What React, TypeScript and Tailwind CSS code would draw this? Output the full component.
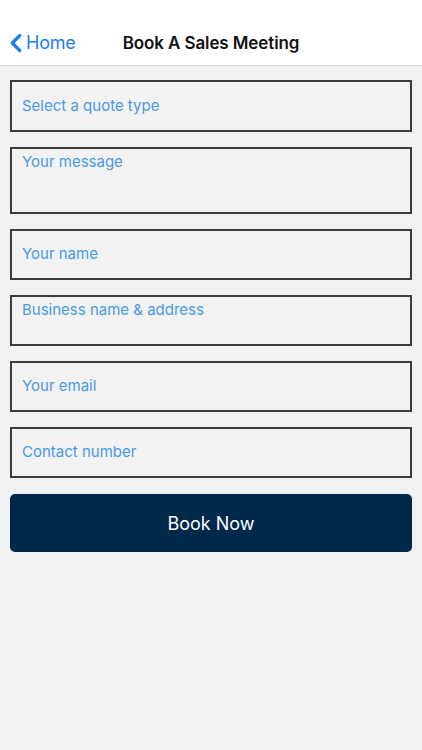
import { ChevronLeft } from "lucide-react";

const fields = [
  { label: "Select a quote type", tall: false },
  { label: "Your message", tall: true },
  { label: "Your name", tall: false },
  { label: "Business name & address", tall: true, short: true },
  { label: "Your email", tall: false },
  { label: "Contact number", tall: false },
];

export default function App() {
  return (
    <div className="min-h-[750px] bg-[#f1f1f1] font-['Inter',sans-serif]">
      {/* Nav bar */}
      <div className="relative flex h-[66px] items-center border-b border-[#d8d8d8] bg-white pt-[20px]">
        <button className="flex items-center pl-[1px] text-[#1d7ef0]">
          <ChevronLeft size={30} strokeWidth={2.6} className="-mr-[5px]" />
          <span className="text-[18px] tracking-[-0.2px]">Home</span>
        </button>
        <h1 className="absolute left-0 right-0 top-[21px] flex h-[46px] items-center justify-center text-[17px] font-semibold tracking-[-0.1px] text-[#111]">
          Book A Sales Meeting
        </h1>
      </div>

      {/* Form */}
      <form className="flex flex-col gap-[15px] px-[10px] pt-[14px]" onSubmit={(e) => e.preventDefault()}>
        {fields.map((f) => (
          <div
            key={f.label}
            className={`flex border-2 border-[#3c3c3c] bg-[#f2f2f2] px-[10px] text-[15px] text-[#4a9ae2] ${
              f.tall
                ? f.short
                  ? "h-[51px] items-start pt-[2px]"
                  : "h-[67px] items-start pt-[2px]"
                : "h-[51px] items-center"
            } ${f.label === "Select a quote type" ? "h-[52px]" : ""}`}
          >
            {f.label}
          </div>
        ))}
        <button
          type="submit"
          className="mt-[1px] h-[58px] rounded-[5px] bg-[#00284a] text-[18px] text-white"
        >
          Book Now
        </button>
      </form>
    </div>
  );
}
